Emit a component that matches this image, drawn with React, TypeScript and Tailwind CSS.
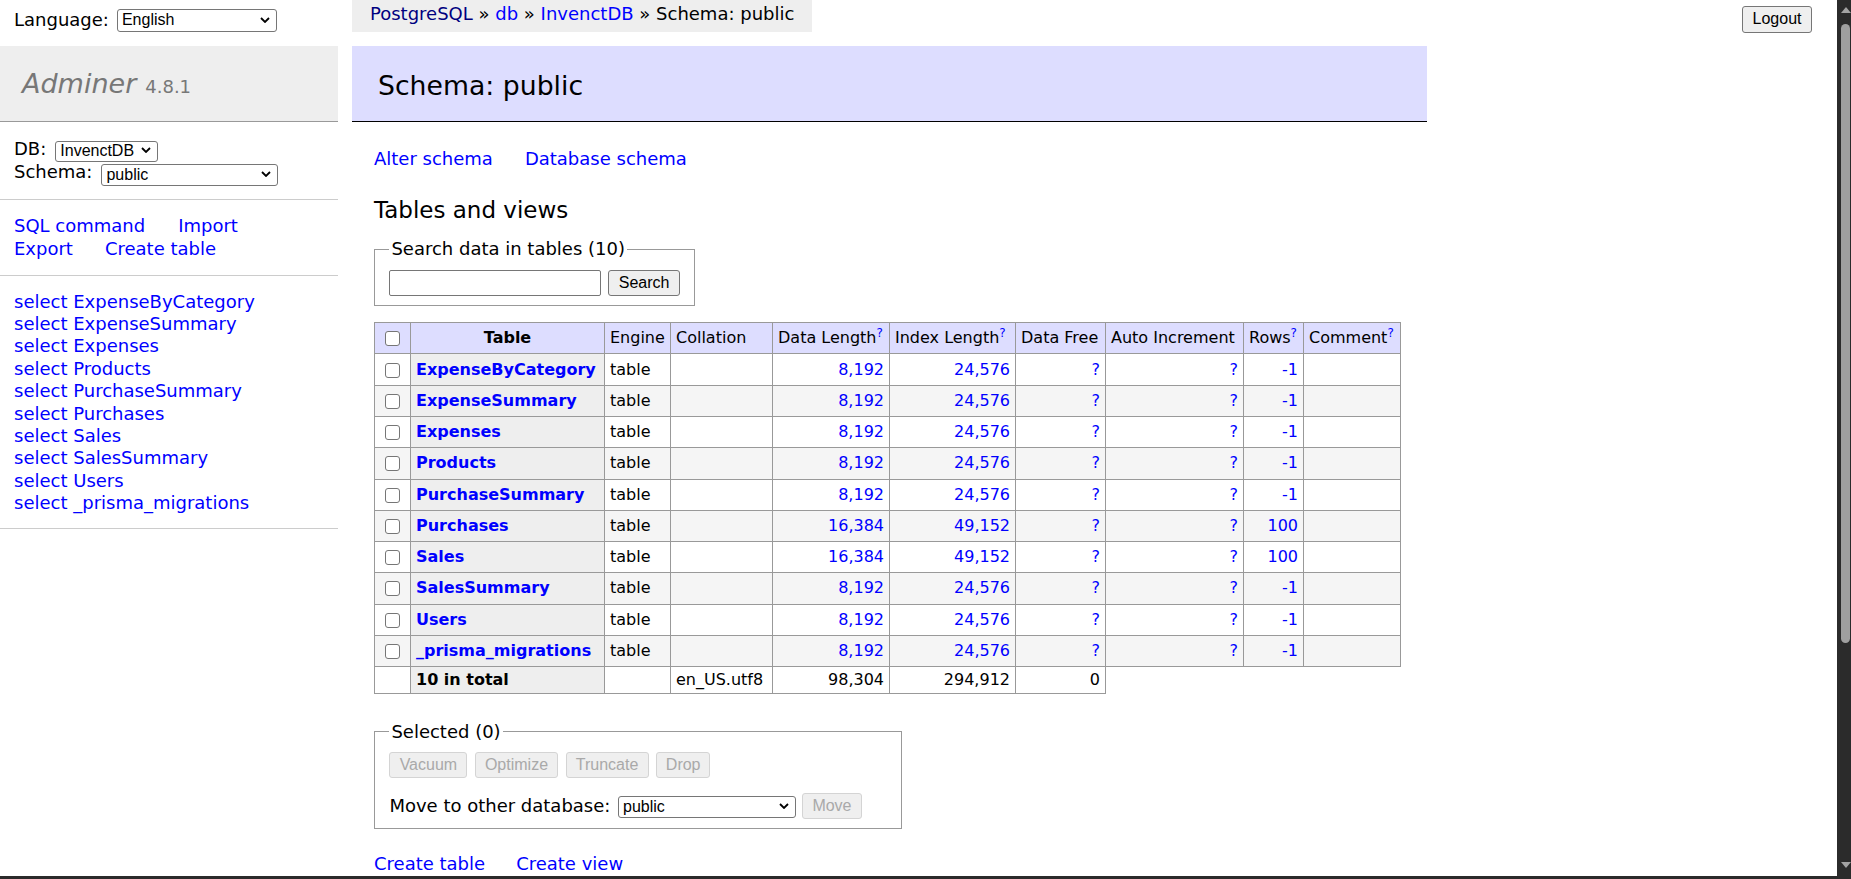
import React from 'react';

const tables = [
  'ExpenseByCategory',
  'ExpenseSummary',
  'Expenses',
  'Products',
  'PurchaseSummary',
  'Purchases',
  'Sales',
  'SalesSummary',
  'Users',
  '_prisma_migrations',
];

const rows = [
  { name: 'ExpenseByCategory', data: '8,192', index: '24,576', rows: '-1' },
  { name: 'ExpenseSummary', data: '8,192', index: '24,576', rows: '-1' },
  { name: 'Expenses', data: '8,192', index: '24,576', rows: '-1' },
  { name: 'Products', data: '8,192', index: '24,576', rows: '-1' },
  { name: 'PurchaseSummary', data: '8,192', index: '24,576', rows: '-1' },
  { name: 'Purchases', data: '16,384', index: '49,152', rows: '100' },
  { name: 'Sales', data: '16,384', index: '49,152', rows: '100' },
  { name: 'SalesSummary', data: '8,192', index: '24,576', rows: '-1' },
  { name: 'Users', data: '8,192', index: '24,576', rows: '-1' },
  { name: '_prisma_migrations', data: '8,192', index: '24,576', rows: '-1' },
];

const Chevron = () => (
  <svg
    width="10"
    height="6"
    viewBox="0 0 10 6"
    className="pointer-events-none absolute right-[7px] top-1/2 -translate-y-1/2"
  >
    <path d="M1 1l4 4 4-4" fill="none" stroke="#000" strokeWidth="1.8" />
  </svg>
);

function Select({ value, className }: { value: string; className: string }) {
  return (
    <div className={`relative shrink-0 ${className}`}>
      <select
        defaultValue={value}
        className="h-full w-full appearance-none rounded-[3px] border border-[#767676] bg-white pl-[4px] pr-[20px] font-['Liberation_Sans',Arial,sans-serif] text-[16px] leading-none text-black outline-none"
      >
        <option>{value}</option>
      </select>
      <Chevron />
    </div>
  );
}

function Btn({ label, disabled, className }: { label: string; disabled?: boolean; className: string }) {
  return (
    <button
      type="button"
      disabled={disabled}
      className={`shrink-0 rounded-[3px] border font-['Liberation_Sans',Arial,sans-serif] text-[16px] leading-none ${
        disabled ? 'border-[#d4d4d4] bg-[#efefef] text-[#a9a9a9]' : 'border-[#767676] bg-[#efefef] text-black'
      } ${className}`}
    >
      {label}
    </button>
  );
}

const Checkbox = () => (
  <input
    type="checkbox"
    className="inline-block h-[15px] w-[15px] appearance-none rounded-[3px] border border-[#767676] bg-white align-middle"
  />
);

const Q = () => <sup className="text-[#00f]">?</sup>;

function Sidebar() {
  return (
    <div className="w-[338px] shrink-0">
      {/* language */}
      <div className="flex h-[46px] items-start gap-[8px] pl-[14px] pt-[8px]">
        <span className="leading-[23px]">Language:</span>
        <Select value="English" className="h-[23px] w-[160px]" />
      </div>

      {/* logo */}
      <div className="flex h-[76px] items-baseline border-b border-[#999] bg-[#eee] pl-[22px] pt-[21px] text-[#777]">
        <span className="text-[27px] italic leading-[33.75px]">Adminer</span>
        <span className="ml-[9px] text-[18px]">4.8.1</span>
      </div>

      {/* db / schema */}
      <div className="border-b border-[#ccc] pb-[14.5px] pl-[14px] pt-[16.5px]">
        <div className="flex h-[22px] items-center gap-[9px]">
          <span>DB:</span>
          <Select value="InvenctDB" className="h-[21px] w-[103px]" />
        </div>
        <div className="flex h-[24px] items-end gap-[9px]">
          <span className="self-start">Schema:</span>
          <Select value="public" className="h-[22px] w-[177px]" />
        </div>
      </div>

      {/* links */}
      <div className="border-b border-[#ccc] pb-[14.5px] pl-[14px] pt-[15px] text-[#00f]">
        <div className="flex gap-[33px]">
          <a>SQL command</a>
          <a>Import</a>
        </div>
        <div className="flex gap-[32px]">
          <a>Export</a>
          <a>Create table</a>
        </div>
      </div>

      {/* tables */}
      <ul className="border-b border-[#ccc] pb-[13.5px] pl-[14px] pt-[15px] leading-[22.4px] text-[#00f]">
        {tables.map((t) => (
          <li key={t}>
            <a>select {t}</a>
          </li>
        ))}
      </ul>
    </div>
  );
}

function TablesList() {
  const cell = 'border-b border-r border-[#999] px-[5px] align-middle';
  return (
    <table className="mt-[16.6px] w-[1027px] table-fixed border-separate border-spacing-0 border-l border-t border-[#999] text-[16px] leading-[20px]">
      <thead>
        <tr className="h-[31px] bg-[#ddf]">
          <td className="w-[36px] border-b border-r border-[#999] text-center align-middle">
            <Checkbox />
          </td>
          <th className={`w-[194px] text-center font-bold ${cell}`}>Table</th>
          <td className={`w-[66px] ${cell}`}>Engine</td>
          <td className={`w-[102px] ${cell}`}>Collation</td>
          <td className={`w-[117px] whitespace-nowrap ${cell}`}>
            Data Length<Q />
          </td>
          <td className={`w-[126px] whitespace-nowrap ${cell}`}>
            Index Length<Q />
          </td>
          <td className={`w-[90px] whitespace-nowrap ${cell}`}>Data Free</td>
          <td className={`w-[138px] whitespace-nowrap ${cell}`}>Auto Increment</td>
          <td className={`w-[60px] whitespace-nowrap ${cell}`}>
            Rows<Q />
          </td>
          <td className={`w-[97px] whitespace-nowrap ${cell}`}>
            Comment<Q />
          </td>
        </tr>
      </thead>
      <tbody>
        {rows.map((r, i) => (
          <tr key={r.name} className={`h-[31.27px] ${i % 2 ? 'bg-[#f5f5f5]' : 'bg-white'}`}>
            <td className="border-b border-r border-[#999] text-center align-middle">
              <Checkbox />
            </td>
            <th className={`whitespace-nowrap bg-[#eee] text-left font-bold text-[#00f] ${cell}`}>
              <a>{r.name}</a>
            </th>
            <td className={cell}>table</td>
            <td className={cell}></td>
            <td className={`text-right text-[#00f] ${cell}`}>{r.data}</td>
            <td className={`text-right text-[#00f] ${cell}`}>{r.index}</td>
            <td className={`text-right text-[#00f] ${cell}`}>?</td>
            <td className={`text-right text-[#00f] ${cell}`}>?</td>
            <td className={`text-right text-[#00f] ${cell}`}>{r.rows}</td>
            <td className={cell}></td>
          </tr>
        ))}
        <tr className="h-[27.3px]">
          <td className={cell}></td>
          <th className={`bg-[#eee] text-left font-bold ${cell}`}>10 in total</th>
          <td className={cell}></td>
          <td className={cell}>en_US.utf8</td>
          <td className={`text-right ${cell}`}>98,304</td>
          <td className={`text-right ${cell}`}>294,912</td>
          <td className={`text-right ${cell}`}>0</td>
        </tr>
      </tbody>
    </table>
  );
}

function Main() {
  return (
    <div className="min-w-0 flex-1 pl-[14px]">
      {/* breadcrumb + logout */}
      <div className="flex h-[32px] items-start justify-between">
        <div className="h-[32px] whitespace-nowrap bg-[#eee] px-[18px] pt-[2.5px]">
          <a className="text-[#000080]">PostgreSQL</a> » <a className="text-[#00f]">db</a> »{' '}
          <a className="text-[#00f]">InvenctDB</a> » Schema: public
        </div>
        <Btn label="Logout" className="mr-[25px] mt-[5.5px] h-[27px] w-[70px]" />
      </div>

      <h2 className="mt-[14px] h-[76px] w-[1075px] border-b border-black bg-[#ddf] pl-[26px] pt-[22.5px] text-[26.7px] leading-[33.4px]">
        Schema: public
      </h2>

      <div className="pl-[22px]">
        <div className="mt-[26px] flex gap-[32px] text-[#00f]">
          <a>Alter schema</a>
          <a>Database schema</a>
        </div>

        <h3 className="mt-[25px] text-[23px] leading-[28.75px]">Tables and views</h3>

        <fieldset className="mt-[13.75px] w-fit border border-[#999] px-[14.4px] pb-[9px]">
          <legend className="px-[2px] leading-[22.5px]">Search data in tables (10)</legend>
          <div className="mt-[9px] flex gap-[7.6px]">
            <input
              type="search"
              className="h-[26.4px] w-[211.4px] rounded-[2px] border border-[#767676] bg-white"
            />
            <Btn label="Search" className="h-[26px] w-[71.4px]" />
          </div>
        </fieldset>

        <TablesList />

        <fieldset className="mt-[26.2px] w-[528px] border border-[#999] px-[14.4px] pb-[9px]">
          <legend className="px-[2px] leading-[22.5px]">Selected (0)</legend>
          <div className="mt-[9.3px] flex gap-[7.6px]">
            <Btn disabled label="Vacuum" className="h-[25.4px] w-[78px]" />
            <Btn disabled label="Optimize" className="h-[25.4px] w-[83px]" />
            <Btn disabled label="Truncate" className="h-[25.4px] w-[83px]" />
            <Btn disabled label="Drop" className="h-[25.4px] w-[54px]" />
          </div>
          <div className="mt-[15.6px] flex h-[25.4px] items-center">
            <span>Move to other database:</span>
            <Select value="public" className="ml-[7.7px] h-[22.4px] w-[177.5px]" />
            <Btn disabled label="Move" className="ml-[6.4px] h-[25.4px] w-[60px]" />
          </div>
        </fieldset>

        <div className="mt-[24.6px] flex gap-[31px] text-[#00f]">
          <a>Create table</a>
          <a>Create view</a>
        </div>
      </div>
    </div>
  );
}

function Scrollbar() {
  return (
    <div className="flex w-[14px] shrink-0 flex-col bg-[#2b2b2b] pl-[4px]">
      <svg width="10" height="6" viewBox="0 0 10 6" className="mt-[7px]">
        <path d="M0 6L5 0l5 6z" fill="#a3a3a3" />
      </svg>
      <div className="mt-[11px] h-[619px] w-[9px] rounded-full bg-[#9f9f9f]" />
      <div className="flex-1" />
      <svg width="10" height="6" viewBox="0 0 10 6" className="mb-[8px]">
        <path d="M0 0l5 6 5-6z" fill="#a3a3a3" />
      </svg>
    </div>
  );
}

export default function App() {
  return (
    <div className="flex h-[879px] w-[1851px] flex-col overflow-hidden bg-white font-['DejaVu_Sans',Verdana,sans-serif] text-[18px] leading-[22.5px] text-black">
      <div className="flex h-[876px] min-h-0">
        <div className="flex w-[1837px] overflow-hidden">
          <Sidebar />
          <Main />
        </div>
        <Scrollbar />
      </div>
      <div className="h-[3px] bg-[#2b2b2b]" />
    </div>
  );
}
